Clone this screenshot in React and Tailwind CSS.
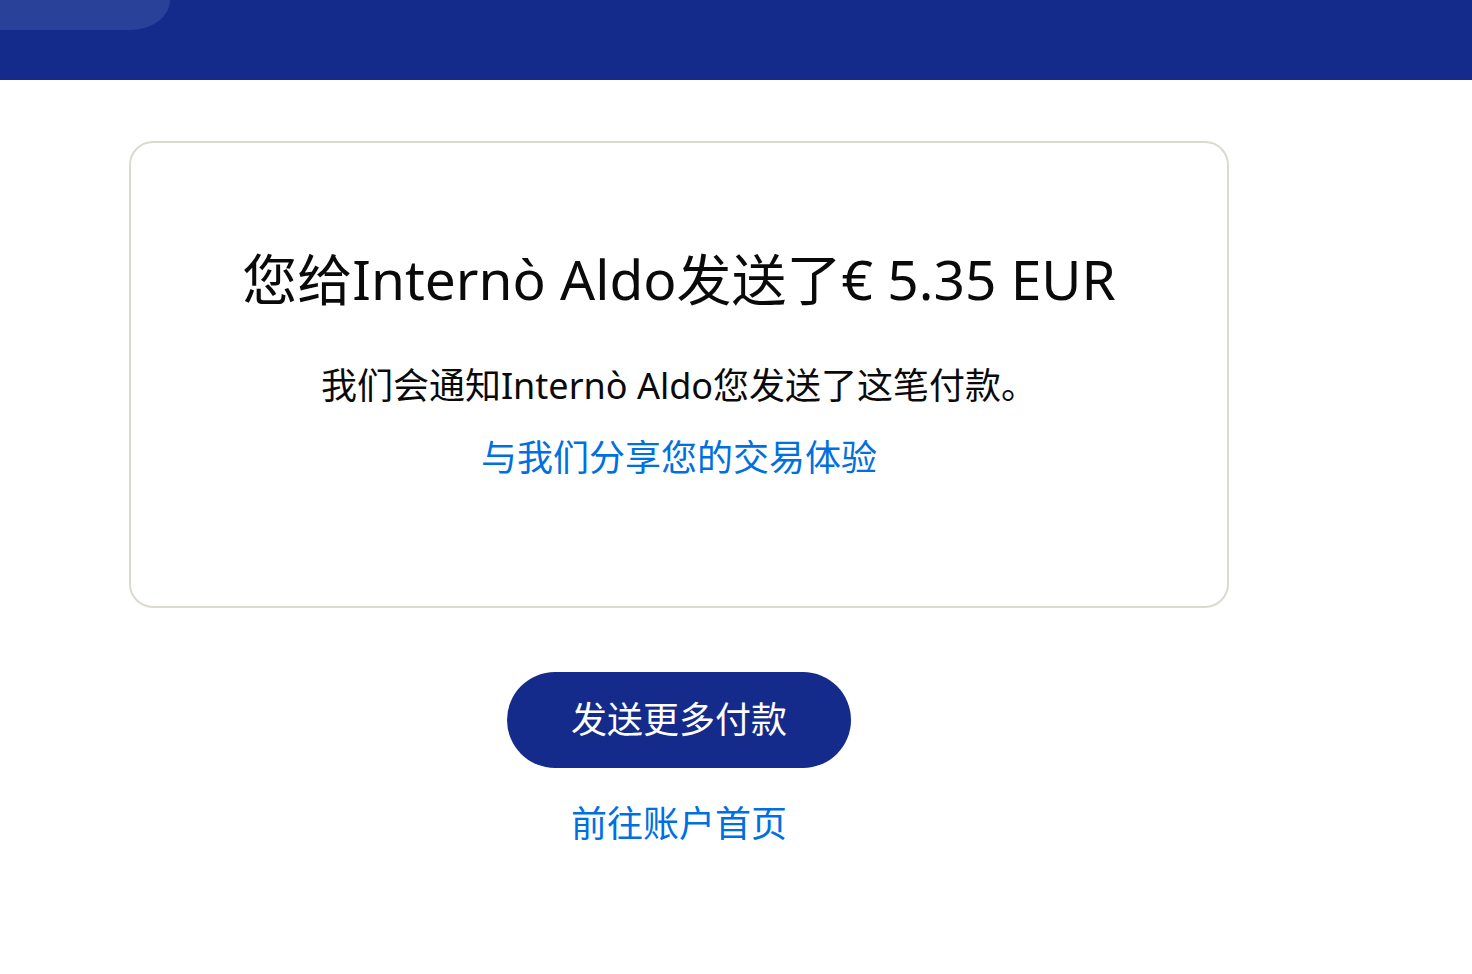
import React from 'react';

const font = { fontFamily: '"Noto Sans", "Noto Sans CJK SC", sans-serif' };

export default function App() {
  return (
    <div className="min-h-[974px] bg-white" style={font}>
      {/* 顶部栏 */}
      <div className="h-[80px] bg-[#142b8c] relative overflow-hidden">
        <div className="absolute left-0 top-0 h-[30px] w-[170px] bg-[#2a419a] rounded-br-[40px_30px]"></div>
      </div>

      <div className="ml-[129px] w-[1100px] pt-[61px] flex flex-col items-center">
        <div className="w-full h-[467px] border-2 border-[#dcd9d0] rounded-[24px] flex flex-col items-center pt-[104px]">
          <h1 className="text-[55px] leading-[64px] text-[#0a0a0a] font-normal whitespace-nowrap">
            您给Internò Aldo发送了€ 5.35 EUR
          </h1>
          <p className="mt-[53px] text-[36px] leading-[44px] text-[#0a0a0a] whitespace-nowrap">
            我们会通知Internò Aldo您发送了这笔付款。
          </p>
          <a href="#" className="mt-[26px] text-[36px] leading-[48px] text-[#0070e0] whitespace-nowrap">
            与我们分享您的交易体验
          </a>
        </div>

        <button
          type="button"
          className="mt-[64px] w-[344px] h-[96px] rounded-full bg-[#142b8c] text-white text-[36px] leading-[48px]"
        >
          发送更多付款
        </button>
        <a href="#" className="mt-[32px] text-[36px] leading-[48px] text-[#0070e0]">
          前往账户首页
        </a>
      </div>
    </div>
  );
}
